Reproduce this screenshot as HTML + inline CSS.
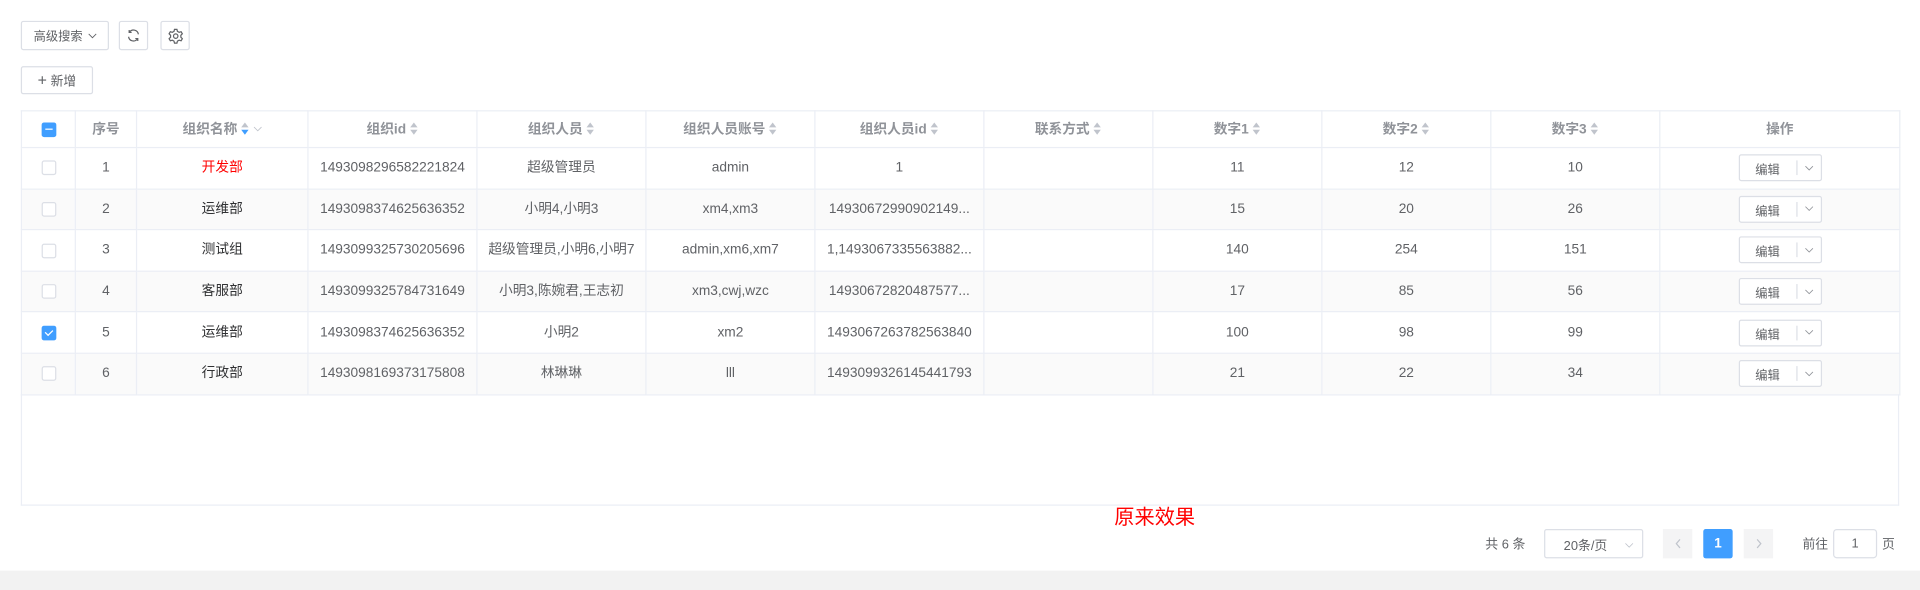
<!DOCTYPE html>
<html><head><meta charset="utf-8">
<style>
html,body{margin:0;padding:0;width:1920px;height:590px;overflow:hidden;background:#fff}
#w{position:absolute;left:0;top:0;width:1568px;height:482px;transform:scale(1.22449);transform-origin:0 0;font-family:"Liberation Sans","Noto Sans CJK SC",sans-serif;color:#606266}
.btn{position:absolute;border:1px solid #dcdfe6;border-radius:2px;box-sizing:border-box;background:#fff;font-size:10px;color:#606266;display:flex;align-items:center;justify-content:center;line-height:12px}
.dn{position:relative;top:1.5px}
table{position:absolute;left:17px;top:90px;border-collapse:collapse;table-layout:fixed;width:1534px;font-size:11.2px}
td,th{border:1px solid #ebeef5;text-align:center;padding:0;white-space:nowrap;overflow:hidden;line-height:14px;vertical-align:middle}
th{height:29px;color:#909399;font-weight:bold}
td{height:32.6px}
tr.s td{background:#fafafa}
.cb{display:inline-block;width:10px;height:10px;border:1px solid #dcdfe6;border-radius:2px;background:#fff;vertical-align:middle;position:relative}
.cb.on{background:#409eff;border-color:#409eff}
.sort{display:inline-block;width:7px;height:12px;vertical-align:middle;margin-left:3px;position:relative}
.sort:before{content:"";position:absolute;left:0;top:0;border:3.5px solid transparent;border-bottom:4px solid #c0c4cc;border-top:none}
.sort:after{content:"";position:absolute;left:0;top:6px;border:3.5px solid transparent;border-top:4px solid #c0c4cc;border-bottom:none}
.sort.d:after{border-top-color:#409eff}
.ed{display:inline-flex;width:68px;height:22px;border:1px solid #dcdfe6;border-radius:2px;box-sizing:border-box;font-size:10px;align-items:center;vertical-align:middle;background:#fff}
.ed span:first-child{width:46px;border-right:1px solid #dcdfe6;line-height:12px;padding-top:3px;height:9px;margin-top:0}
.ed span:last-child{flex:1;display:flex;justify-content:center;align-items:center}
.dk{color:#303133}
</style></head><body><div id="w">
<svg width="0" height="0" style="position:absolute"><defs><symbol id="chev" viewBox="0 0 8 5"><path d="M0.5 0.5L4 4L7.5 0.5" fill="none" stroke="currentColor" stroke-width="0.8"/></symbol></defs></svg>
<div class="btn" style="left:17px;top:17px;width:72px;height:24px"><span class="dn">高级搜索</span><svg width="7" height="5" style="margin-left:4px;color:#606266"><use href="#chev"/></svg></div>
<div class="btn" style="left:97px;top:17px;width:24px;height:24px"><svg width="12" height="12" viewBox="0 0 12 12" fill="none" stroke="#606266" stroke-width="1"><path d="M10 5A4 4 0 0 0 2.8 3.2M2 7a4 4 0 0 0 7.2 1.8"/><path d="M2.5 1.5v2h2M9.5 10.5v-2h-2"/></svg></div>
<div class="btn" style="left:131px;top:17px;width:24px;height:24px"><svg width="13" height="13" viewBox="0 0 13 13" fill="none" stroke="#606266" stroke-width="1"><circle cx="6.5" cy="6.5" r="1.8"/><path d="M5.5 1h2l.4 1.6 1.4.8 1.6-.5 1 1.7-1.2 1.2v1.6l1.2 1.2-1 1.7-1.6-.5-1.4.8-.4 1.6h-2l-.4-1.6-1.4-.8-1.6.5-1-1.7 1.2-1.2V5.8L1.1 4.6l1-1.7 1.6.5 1.4-.8z"/></svg></div>
<div class="btn" style="left:17px;top:54px;width:59px;height:23px;font-size:10.5px"><span style="font-size:13px;margin-right:3px;color:#606266">+</span><span class="dn" style="top:1px">新增</span></div>
<table>
<colgroup><col style="width:44px"><col style="width:50px"><col style="width:140px"><col style="width:138px"><col style="width:138px"><col style="width:138px"><col style="width:138px"><col style="width:138px"><col style="width:138px"><col style="width:138px"><col style="width:138px"><col style="width:196px"></colgroup>
<tr><th><span class="cb on"><span style="position:absolute;left:2px;top:4.5px;width:6px;height:1px;background:#fff"></span></span></th><th>序号</th><th>组织名称<span class="sort d"></span> <svg width="7" height="5" style="color:#c0c4cc;vertical-align:middle"><use href="#chev"/></svg></th><th>组织id<span class="sort"></span></th><th>组织人员<span class="sort"></span></th><th>组织人员账号<span class="sort"></span></th><th>组织人员id<span class="sort"></span></th><th>联系方式<span class="sort"></span></th><th>数字1<span class="sort"></span></th><th>数字2<span class="sort"></span></th><th>数字3<span class="sort"></span></th><th>操作</th></tr>
<tr><td><span class="cb"></span></td><td>1</td><td style="color:#f00">开发部</td><td>1493098296582221824</td><td>超级管理员</td><td>admin</td><td>1</td><td></td><td>11</td><td>12</td><td>10</td><td><span class="ed"><span>编辑</span><span><svg width="7" height="5" style="color:#909399"><use href="#chev"/></svg></span></span></td></tr>
<tr class="s"><td><span class="cb"></span></td><td>2</td><td class="dk">运维部</td><td>1493098374625636352</td><td>小明4,小明3</td><td>xm4,xm3</td><td>14930672990902149...</td><td></td><td>15</td><td>20</td><td>26</td><td><span class="ed"><span>编辑</span><span><svg width="7" height="5" style="color:#909399"><use href="#chev"/></svg></span></span></td></tr>
<tr><td><span class="cb"></span></td><td>3</td><td class="dk">测试组</td><td>1493099325730205696</td><td>超级管理员,小明6,小明7</td><td>admin,xm6,xm7</td><td>1,1493067335563882...</td><td></td><td>140</td><td>254</td><td>151</td><td><span class="ed"><span>编辑</span><span><svg width="7" height="5" style="color:#909399"><use href="#chev"/></svg></span></span></td></tr>
<tr class="s"><td><span class="cb"></span></td><td>4</td><td class="dk">客服部</td><td>1493099325784731649</td><td>小明3,陈婉君,王志初</td><td>xm3,cwj,wzc</td><td>14930672820487577...</td><td></td><td>17</td><td>85</td><td>56</td><td><span class="ed"><span>编辑</span><span><svg width="7" height="5" style="color:#909399"><use href="#chev"/></svg></span></span></td></tr>
<tr><td><span class="cb on"><span style="position:absolute;left:3px;top:1px;width:3px;height:5px;border:solid #fff;border-width:0 1px 1px 0;transform:rotate(45deg)"></span></span></td><td>5</td><td class="dk">运维部</td><td>1493098374625636352</td><td>小明2</td><td>xm2</td><td>1493067263782563840</td><td></td><td>100</td><td>98</td><td>99</td><td><span class="ed"><span>编辑</span><span><svg width="7" height="5" style="color:#909399"><use href="#chev"/></svg></span></span></td></tr>
<tr class="s"><td><span class="cb"></span></td><td>6</td><td class="dk">行政部</td><td>1493098169373175808</td><td>林琳琳</td><td>lll</td><td>1493099326145441793</td><td></td><td>21</td><td>22</td><td>34</td><td><span class="ed"><span>编辑</span><span><svg width="7" height="5" style="color:#909399"><use href="#chev"/></svg></span></span></td></tr>
</table>
<div style="position:absolute;left:17px;top:322px;width:1534px;height:91px;border:1px solid #ebeef5;border-top:none;box-sizing:border-box"></div>
<div style="position:absolute;left:910px;top:409px;font-size:16.5px;color:#f00">原来效果</div>
<div style="position:absolute;left:1213px;top:437px;font-size:10.5px">共 6 条</div>
<div class="btn" style="left:1261px;top:432px;width:81px;height:24px;justify-content:flex-start;padding-left:15px;font-size:10.5px"><span class="dn">20条/页</span><svg width="7" height="5" style="position:absolute;right:7px;top:10px;color:#c0c4cc"><use href="#chev"/></svg></div>
<div style="position:absolute;left:1358px;top:432px;width:24px;height:24px;background:#f4f4f5;display:flex;align-items:center;justify-content:center"><svg width="5" height="8" viewBox="0 0 5 8"><path d="M4 0.5L1 4L4 7.5" fill="none" stroke="#c0c4cc" stroke-width="1"/></svg></div>
<div style="position:absolute;left:1391px;top:432px;width:24px;height:24px;background:#409eff;color:#fff;font-size:11px;font-weight:bold;text-align:center;line-height:24px;border-radius:2px">1</div>
<div style="position:absolute;left:1424px;top:432px;width:24px;height:24px;background:#f4f4f5;display:flex;align-items:center;justify-content:center"><svg width="5" height="8" viewBox="0 0 5 8"><path d="M1 0.5L4 4L1 7.5" fill="none" stroke="#c0c4cc" stroke-width="1"/></svg></div>
<div style="position:absolute;left:1472px;top:437px;font-size:10.5px">前往</div>
<div class="btn" style="left:1497px;top:432px;width:36px;height:24px;font-size:10.5px;border-radius:3px">1</div>
<div style="position:absolute;left:1537px;top:437px;font-size:10.5px">页</div>
<div style="position:absolute;left:0;top:466px;width:1568px;height:16px;background:#f2f2f2"></div>
</div></body></html>
